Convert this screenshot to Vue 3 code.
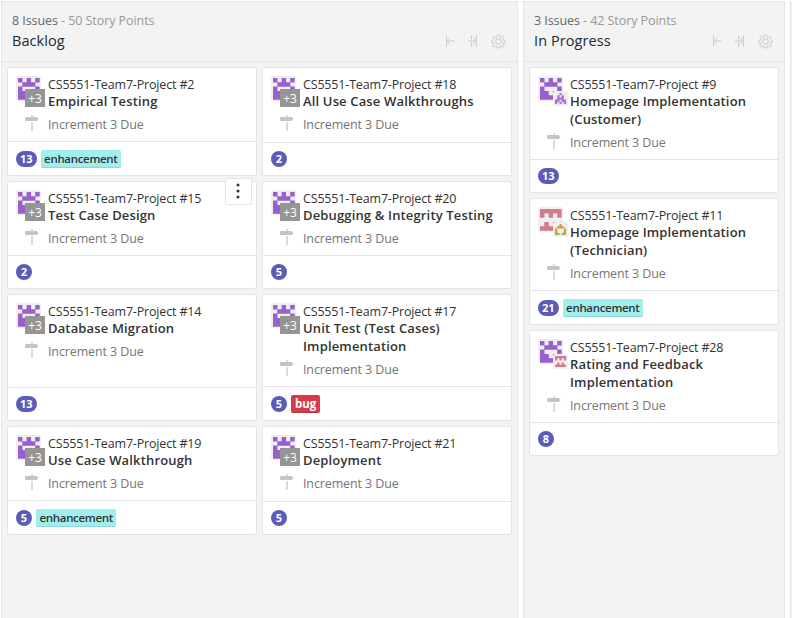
<script setup>
const patterns = {
  castle: { color: '#9860cd', rows: ['X.X.X', '.XXX.', 'X...X', 'XX.XX', 'XXXXX'] },
  violet: { color: '#b56be0', rows: ['..X..', '.X.X.', '.XXX.', 'XX.XX', 'X.X.X'] },
  rose: { color: '#d27d8b', rows: ['XXXXX', 'X.X.X', '.....', '.X.X.', 'XXXXX'] },
  gold: { color: '#cc9c4b', rows: ['..X..', '.XXX.', 'X...X', 'X...X', 'XX.XX'] },
}

const shapeOf = (name) =>
  patterns[name].rows
    .flatMap((row, y) => [...row].map((c, x) => (c === 'X' ? `M${x} ${y}h1.04v1.04h-1.04z` : '')))
    .join('')

const columns = [
  {
    name: 'Backlog',
    issues: 8,
    points: 50,
    wide: true,
    cards: [
      { id: 2, title: 'Empirical Testing', points: 13, label: 'enhancement' },
      { id: 18, title: 'All Use Case Walkthroughs', points: 2 },
      { id: 15, title: 'Test Case Design', points: 2, menu: true },
      { id: 20, title: 'Debugging & Integrity Testing', points: 5 },
      { id: 14, title: 'Database Migration', points: 13 },
      { id: 17, title: 'Unit Test (Test Cases) Implementation', points: 5, label: 'bug' },
      { id: 19, title: 'Use Case Walkthrough', points: 5, label: 'enhancement' },
      { id: 21, title: 'Deployment', points: 5 },
    ],
  },
  {
    name: 'In Progress',
    issues: 3,
    points: 42,
    wide: false,
    cards: [
      { id: 9, title: 'Homepage Implementation (Customer)', points: 13, avatar: 'castle', second: 'violet' },
      { id: 11, title: 'Homepage Implementation (Technician)', points: 21, label: 'enhancement', avatar: 'rose', second: 'gold' },
      { id: 28, title: 'Rating and Feedback Implementation', points: 8, avatar: 'castle', second: 'rose' },
    ],
  },
]
</script>

<template>
  <main class="board">
    <section v-for="col in columns" :key="col.name" class="column" :class="{ wide: col.wide }">
      <header class="head">
        <div class="counts"><span class="issues">{{ col.issues }} Issues</span> - {{ col.points }} Story Points</div>
        <div class="title-row">
          <h2>{{ col.name }}</h2>
          <div class="tools">
            <svg width="10" height="12" viewBox="0 0 10 12">
              <path d="M1.500 0.500v4M1.500 7.500v4M1 6h8.500M5 2.500L1.500 6L5 9.500" />
            </svg>
            <svg width="10" height="12" viewBox="0 0 10 12">
              <path d="M3.500 0.500v4M3.500 7.500v4M8.500 0.500v4M8.500 7.500v4M0 6h9M5 2.500L8.500 6L5 9.500" />
            </svg>
            <svg class="gear" width="15" height="15" viewBox="0 0 15 15">
              <path d="M6.300 1h2.400l.5 1.800 1 .4 1.600-.9 1.400 1.500-.9 1.500.4 1 1.500.5v1.700l-1.500.5-.4 1 .9 1.600-1.500 1.400-1.500-.9-1 .4L8.700 14H6.300l-.5-1.500-1-.4-1.600.9-1.400-1.400.9-1.600-.4-1L.8 8.500V6.800l1.500-.5.4-1-.9-1.600 1.400-1.400 1.600.9 1-.4z" />
              <circle cx="7.500" cy="7.600" r="2.900" />
            </svg>
          </div>
        </div>
      </header>

      <div class="cards">
        <article v-for="card in col.cards" :key="card.id" class="card">
          <div class="body">
            <div class="people">
              <svg class="avatar" width="25" height="25" viewBox="0 0 25 25">
                <rect class="tile" width="25" height="25" rx="2" />
                <path :fill="patterns[card.avatar || 'castle'].color" transform="translate(2 2) scale(4.300)" :d="shapeOf(card.avatar || 'castle')" />
              </svg>
              <svg v-if="card.second" class="second" width="15" height="15" viewBox="0 0 15 15">
                <rect class="tile" width="15" height="15" rx="2" />
                <path :fill="patterns[card.second].color" transform="translate(2 2) scale(2.200)" :d="shapeOf(card.second)" />
              </svg>
              <span v-else class="more">+3</span>
            </div>
            <div class="text">
              <div class="ref">CS5551-Team7-Project <span class="num">#{{ card.id }}</span></div>
              <div class="name">{{ card.title }}</div>
            </div>
            <svg class="sign" width="14" height="16" viewBox="0 0 14 16">
              <path d="M6.400 0h1.200v2h4l2 1.900-2 2.100H1.200Q0 6 0 4.900V3.100Q0 2 1.200 2h5.200zM6.400 7h1.200v9H6.400z" />
            </svg>
            <div class="milestone">Increment 3 Due</div>
          </div>
          <footer class="foot">
            <span class="points">{{ card.points }}</span>
            <span v-if="card.label" class="label" :class="card.label">{{ card.label }}</span>
          </footer>
          <button v-if="card.menu" class="menu" type="button">
            <svg width="4" height="16" viewBox="0 0 4 16">
              <circle cx="2" cy="2" r="1.500" /><circle cx="2" cy="8" r="1.500" /><circle cx="2" cy="14" r="1.500" />
            </svg>
          </button>
        </article>
      </div>
    </section>
    <section class="column next"><header class="head"></header></section>
  </main>
</template>

<style>
body {
  background: #fff;
  overflow: hidden;
}
</style>

<style scoped>
.board {
  display: flex;
  gap: 5px;
  width: 792px;
  height: 618px;
  padding: 1px 0 0 1px;
  box-sizing: border-box;
  overflow: hidden;
  font-family: "Open Sans", "Noto Sans", sans-serif;
  font-size: 12.5px;
  color: #333;
}
.column {
  flex: none;
  width: 262px;
  height: 640px;
  box-sizing: border-box;
  border: 1px solid #e5e5e5;
  background: #f3f3f3;
}
.column.wide {
  width: 517px;
}
.head {
  height: 60px;
  box-sizing: border-box;
  padding: 10px 11px 0 10px;
  border-bottom: 1px solid #e5e5e5;
}
.counts {
  height: 18px;
  line-height: 18px;
  color: #999;
  white-space: nowrap;
  letter-spacing: -0.07px;
}
.issues {
  color: #666;
}
.title-row {
  display: flex;
  align-items: center;
  justify-content: space-between;
  height: 22px;
}
h2 {
  margin: 0;
  font-size: 14.5px;
  line-height: 20px;
  font-weight: 500;
  letter-spacing: 0.08px;
  color: #24292e;
}
.tools {
  display: flex;
  align-items: center;
  gap: 13px;
}
.tools svg {
  fill: none;
  stroke: #c8c8c8;
  stroke-width: 1;
}
.cards {
  display: grid;
  grid-template-columns: 250px;
  gap: 5px;
  padding: 5px;
}
.wide .cards {
  grid-template-columns: 250px 250px;
}
.card {
  position: relative;
  display: flex;
  flex-direction: column;
  box-sizing: border-box;
  border: 1px solid #e5e5e5;
  border-radius: 2px;
  background: #fff;
}
.body {
  flex: 1;
  display: grid;
  grid-template-columns: 32px 1fr;
  align-content: start;
  padding: 8px 8px 7px;
}
.people {
  position: relative;
  height: 35px;
}
.avatar {
  display: block;
}
.tile {
  fill: #efefef;
}
.second {
  position: absolute;
  left: 15px;
  top: 15px;
}
.more {
  position: absolute;
  left: 9px;
  top: 13px;
  width: 20px;
  height: 18px;
  line-height: 19px;
  text-align: center;
  font-size: 12px;
  color: #fff;
  background: #959595;
}
.ref {
  height: 16px;
  line-height: 17px;
  letter-spacing: -0.17px;
  white-space: nowrap;
}
.name {
  padding-bottom: 1px;
  line-height: 18px;
  font-size: 13px;
  font-weight: 600;
  letter-spacing: 0.15px;
}
.sign {
  margin: 4px 0 0 9px;
  fill: #c4c4c4;
}
.milestone {
  height: 18px;
  margin-top: 5px;
  line-height: 18px;
  letter-spacing: -0.12px;
  color: #767676;
}
.foot {
  display: flex;
  align-items: flex-start;
  gap: 4px;
  padding: 8px 8px 7px;
  min-height: 17px;
  border-top: 1px solid #e5e5e5;
}
.foot:has(.label) {
  align-items: center;
}
.points {
  box-sizing: border-box;
  min-width: 16px;
  height: 16px;
  padding: 0 4px;
  border-radius: 8px;
  line-height: 16px;
  text-align: center;
  font-size: 11px;
  font-weight: 700;
  color: #fff;
  background: #5c5cb8;
}
.label {
  height: 18px;
  box-sizing: border-box;
  padding: 0 4px;
  border-radius: 2px;
  line-height: 17px;
  font-size: 11.5px;
  font-weight: 600;
  color: #333;
  background: #a2eeef;
  box-shadow: inset 0 -1px 0 rgba(27, 31, 35, 0.12);
}
.label.enhancement {
  padding: 0 3.5px;
  letter-spacing: -0.32px;
}
.label.bug {
  font-weight: 700;
  color: #fff;
  background: #d73a4a;
}
.menu {
  position: absolute;
  right: 4px;
  top: -4px;
  display: flex;
  align-items: center;
  justify-content: center;
  width: 27px;
  height: 27px;
  padding: 0 1px 1px 0;
  border: 1px solid #e5e5e5;
  border-radius: 2px;
  background: #fff;
}
.menu svg {
  fill: #333;
}
</style>
